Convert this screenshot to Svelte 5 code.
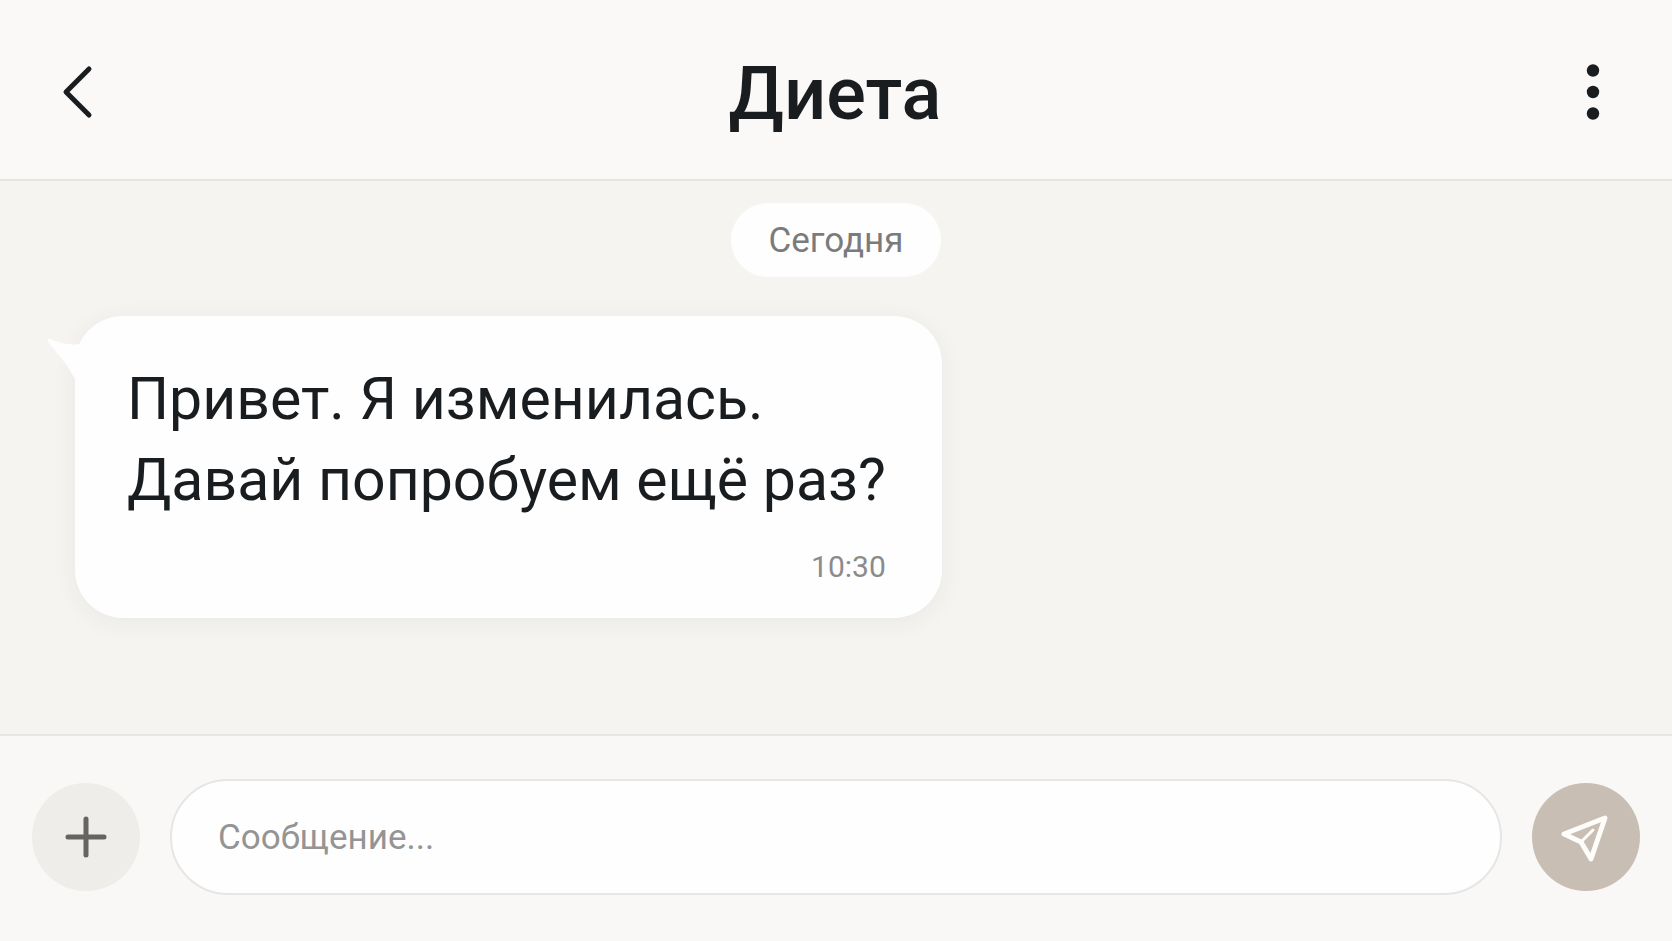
<!-- src/App.svelte -->
<script lang="ts">
	type Message = { id: number; lines: string[]; time: string };

	const title = 'Диета';
	const day = 'Сегодня';

	let messages = $state<Message[]>([
		{ id: 1, lines: ['Привет. Я изменилась.', 'Давай попробуем ещё раз?'], time: '10:30' }
	]);
	let draft = $state('');

	function send(event: SubmitEvent) {
		event.preventDefault();
		const text = draft.trim();
		if (!text) return;
		const time = new Date().toTimeString().slice(0, 5);
		messages.push({ id: messages.length + 1, lines: [text], time });
		draft = '';
	}
</script>

<div class="chat">
	<header class="topbar">
		<button type="button" class="icon-button" aria-label="Назад">
			<svg width="60" height="60" viewBox="0 0 60 60" fill="none">
				<path d="M42 7 19 30l23 23" stroke="currentColor" stroke-width="5" stroke-linecap="round" stroke-linejoin="round" />
			</svg>
		</button>
		<h1>{title}</h1>
		<button type="button" class="icon-button" aria-label="Меню">
			<svg width="60" height="60" viewBox="0 0 60 60" fill="currentColor">
				<circle cx="30" cy="8.5" r="6.2" />
				<circle cx="30" cy="30" r="6.2" />
				<circle cx="30" cy="51.5" r="6.2" />
			</svg>
		</button>
	</header>

	<main class="thread">
		<div class="day">{day}</div>

		{#each messages as message (message.id)}
			<article class="bubble">
				<svg class="tail" width="40" height="44" viewBox="0 0 40 44" fill="#fefefe">
					<path d="M2 3Q0 0 4 1Q20 8 33 6L40 10V44L29 41Q20 25 11 15Q5 9 2 3Z" />
				</svg>
				<p>
					{#each message.lines as line}
						<span>{line}</span>
					{/each}
				</p>
				<time>{message.time}</time>
			</article>
		{/each}
	</main>

	<form class="composer" onsubmit={send}>
		<button type="button" class="round attach" aria-label="Прикрепить">
			<svg width="54" height="54" viewBox="0 0 54 54" fill="none">
				<path d="M27 9v36M9 27h36" stroke="currentColor" stroke-width="5" stroke-linecap="round" />
			</svg>
		</button>
		<input type="text" bind:value={draft} placeholder="Сообщение..." aria-label="Сообщение" />
		<button type="submit" class="round send" aria-label="Отправить">
			<svg width="54" height="54" viewBox="0 0 54 54" fill="none" stroke="currentColor" stroke-linecap="round" stroke-linejoin="round">
				<path d="M5 24 46 8 32 49 22 32Z" stroke-width="5" />
				<path d="M22 32 34 20" stroke-width="3" />
			</svg>
		</button>
	</form>
</div>

<style>
	:global(body) {
		margin: 0;
		background: #f5f4f1;
	}

	.chat {
		min-height: 100vh;
		display: flex;
		flex-direction: column;
		box-sizing: border-box;
		font-family: Roboto, 'Liberation Sans', sans-serif;
		color: #1a1d1f;
	}

	button {
		padding: 0;
		border: 0;
		background: none;
		color: inherit;
		cursor: pointer;
	}

	svg {
		display: block;
	}

	.topbar {
		display: flex;
		align-items: center;
		justify-content: space-between;
		padding: 46px 49px 41px 47px;
		background: #faf9f7;
		border-bottom: 2px solid #e6e5e2;
	}

	h1 {
		margin: 0;
		padding-top: 4px;
		font-size: 74px;
		line-height: 88px;
		font-weight: 500;
	}

	.thread {
		flex: 1;
		display: flex;
		flex-direction: column;
		align-items: flex-start;
		gap: 39px;
		padding: 22px 75px;
	}

	.day {
		align-self: center;
		padding: 17px 38px 15px;
		border-radius: 37px;
		background: #fefefe;
		color: #7b7b7b;
		font-size: 35px;
		line-height: 42px;
	}

	.bubble {
		position: relative;
		display: flex;
		flex-direction: column;
		gap: 26px;
		padding: 42px 56px 30px 52px;
		border-radius: 48px;
		background: #fefefe;
		box-shadow: 0 4px 24px rgb(60 50 40 / 6%);
	}

	.tail {
		position: absolute;
		top: 22px;
		left: -29px;
	}

	.bubble p {
		margin: 0;
		font-size: 59px;
		line-height: 81px;
	}

	.bubble span {
		display: block;
	}

	time {
		align-self: flex-end;
		color: #8b8b8b;
		font-size: 30px;
		line-height: 42px;
	}

	.composer {
		display: flex;
		align-items: center;
		gap: 30px;
		padding: 43px 32px 46px;
		background: #f9f8f6;
		border-top: 2px solid #e8e7e4;
	}

	.round {
		flex-shrink: 0;
		width: 108px;
		height: 108px;
		display: grid;
		place-items: center;
		border-radius: 50%;
	}

	.attach {
		background: #efedea;
		color: #666463;
	}

	.send {
		background: #c8beb4;
		color: #fefdfa;
	}

	input {
		flex: 1;
		min-width: 0;
		height: 116px;
		box-sizing: border-box;
		padding: 0 46px;
		border: 2px solid #e7e6e4;
		border-radius: 58px;
		background: #fefefe;
		color: inherit;
		font-family: inherit;
		font-size: 35px;
		outline: none;
	}

	input::placeholder {
		color: #949494;
		opacity: 1;
	}
</style>
